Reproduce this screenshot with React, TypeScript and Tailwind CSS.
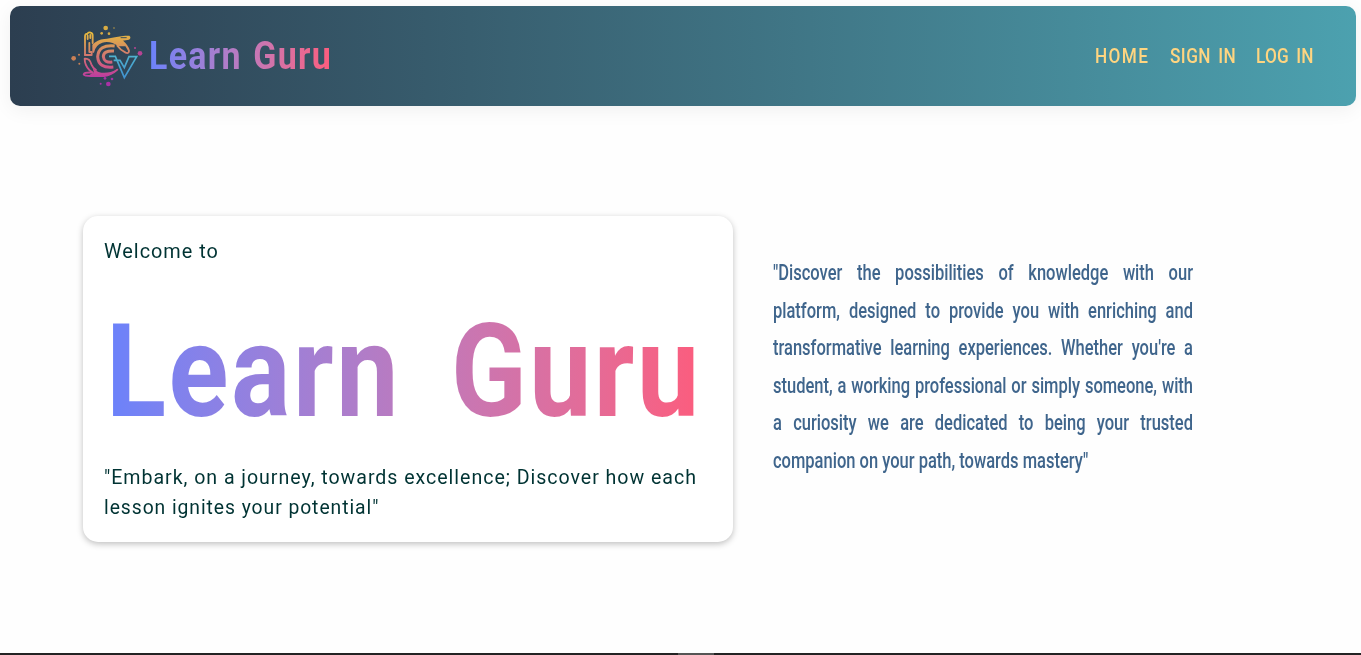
function Logo() {
  return (
    <svg viewBox="0 0 300 240" className="h-20 w-[100px] shrink-0" fill="none" aria-hidden="true">
      <defs>
        <linearGradient id="warm" gradientUnits="userSpaceOnUse" x1="0" y1="50" x2="0" y2="190">
          <stop offset="0" stopColor="#e8bd3c" />
          <stop offset="0.22" stopColor="#dca052" />
          <stop offset="0.45" stopColor="#d4806a" />
          <stop offset="0.75" stopColor="#cf5585" />
          <stop offset="1" stopColor="#b93aa4" />
        </linearGradient>
        <linearGradient id="cool" gradientUnits="userSpaceOnUse" x1="0" y1="120" x2="0" y2="195">
          <stop offset="0" stopColor="#4fb3cf" />
          <stop offset="1" stopColor="#3f8fd0" />
        </linearGradient>
      </defs>
      <g stroke="url(#warm)" strokeWidth="5.5" strokeLinecap="round" strokeLinejoin="round">
        <path d="M75 120V65Q75 55 82 57Q85 50 92 53Q98 54 98 62V84" />
        <path d="M75 120H95V111H88V84M83 62V72M91 60V69" />
        <path d="M186 78Q202 92 207 107Q207 117 197 113Q181 105 172 92" />
        <path d="M74 131Q74 150 88 165L98 173M74 131Q89 129 94 148Q98 158 108 165" />
        <path d="M98 173Q74 171 71 178Q73 183 94 183H132Q154 181 172 164" />
      </g>
      <g fill="url(#warm)">
        <path d="M97 89Q112 74 133 72C155 70 172 62 208 62Q215 68 207 74L188 77L198 94L176 94Q150 76 127 83Q106 90 102 113H97Z" />
        <path d="M98 158Q106 169 124 173Q148 176 172 162Q158 181 132 184H88Q88 176 102 174Z" />
      </g>
      <path d="M182 68H200" stroke="#3a4f5c" strokeWidth="3" />
      <g stroke="url(#warm)" strokeWidth="9">
        <path d="M164 93Q116 88 113 125Q115 161 160 156" />
        <path d="M162 108Q130 106 130 125Q132 144 157 141" />
      </g>
      <path d="M147 124H166L193 188L230 125H207L193 158L180 136H161" stroke="url(#cool)" strokeWidth="5" />
      <g fill="#d9ac43">
        <circle cx="137" cy="39" r="7" />
        <circle cx="125" cy="55" r="4" />
        <circle cx="147" cy="56" r="4" />
        <circle cx="162" cy="39" r="2" />
      </g>
      <g fill="#cb8055">
        <circle cx="41" cy="130" r="7" />
        <circle cx="57" cy="119" r="3" />
        <circle cx="58" cy="146" r="3" />
      </g>
      <g fill="#b64494">
        <circle cx="240" cy="115" r="7" />
        <circle cx="225" cy="99" r="3" />
      </g>
      <g fill="#a832a5">
        <circle cx="145" cy="207" r="7" />
        <circle cx="135" cy="190" r="4" />
        <circle cx="156" cy="192" r="4" />
        <circle cx="122" cy="206" r="3" />
      </g>
    </svg>
  );
}

const links = [
  { label: "HOME", box: "w-[54px] tracking-[1.6px]" },
  { label: "SIGN IN", box: "w-[65px] tracking-[0.5px] [word-spacing:3px]" },
  { label: "LOG IN", box: "w-[57px] tracking-[0.3px] [word-spacing:3px]" },
];

const lines = [
  '"Discover the possibilities of knowledge with our',
  "platform, designed to provide you with enriching and",
  "transformative learning experiences. Whether you're a",
  "student, a working professional or simply someone, with",
  "a curiosity we are dedicated to being your trusted",
];

export default function App() {
  return (
    <div className="flex h-[655px] w-full flex-col overflow-hidden bg-[#fefefe] font-['Roboto',sans-serif]">
      <header className="mt-1.5 mr-[5px] ml-2.5 flex h-[100px] shrink-0 items-start justify-between rounded-[10px] bg-linear-to-r from-[#2c3e50] to-[#4ca1af] shadow-[0_4px_20px_rgba(0,0,0,0.06)]">
        <div className="flex pt-[9px] pl-[50px]">
          <Logo />
          <div className="-ml-[11px] w-[240px] pt-[14px]">
            <h1 className="w-max origin-left scale-x-[0.87] bg-linear-to-r from-[#6a82fb] to-[#fc5c7d] bg-clip-text text-[39px] leading-[54px] font-bold tracking-[1.5px] text-transparent [word-spacing:2px]">
              Learn Guru
            </h1>
          </div>
        </div>
        <nav className="flex gap-[21px] pt-[38px] pr-[43px] text-[20px] leading-6 font-medium whitespace-nowrap text-[#ffd580]">
          {links.map((l) => (
            <a key={l.label} href="#" className={l.box}>
              <span className="inline-block origin-left scale-x-[0.86]">{l.label}</span>
            </a>
          ))}
        </nav>
      </header>

      <main className="flex flex-1 pt-[110px] pl-[83px]">
        <section className="h-[326px] w-[650px] shrink-0 rounded-[15px] bg-white px-[21px] pt-5 text-[20.5px] leading-[30px] text-[#033] shadow-[0_2px_6px_rgba(0,0,0,0.25)]">
          <p className="w-max origin-left scale-x-[0.97] tracking-[1px] whitespace-nowrap">Welcome to</p>
          <h2 className="mt-[31px] ml-0.5 h-[150px] w-max origin-left scale-x-[0.86] bg-linear-to-r from-[#6a82fb] to-[#fc5c7d] bg-clip-text text-[129px] leading-[150px] font-bold tracking-[3px] whitespace-nowrap text-transparent [word-spacing:23px]">
            Learn Guru
          </h2>
          <div className="mt-[15px] tracking-[1px] whitespace-nowrap">
            <p className="w-max origin-left scale-x-[0.956]">
              "Embark, on a journey, towards excellence; Discover how each
            </p>
            <p className="w-max origin-left scale-x-[0.942]">lesson ignites your potential"</p>
          </div>
        </section>
        <section className="ml-10 w-[420px] pt-[38px] text-[22px] leading-[37.5px] font-medium text-[#3f658c]">
          <div className="w-[560px] origin-left scale-x-[0.75] whitespace-nowrap">
            {lines.map((l) => (
              <p key={l} className="[text-align-last:justify]">{l}</p>
            ))}
            <p>companion on your path, towards mastery"</p>
          </div>
        </section>
      </main>

      <footer className="flex h-0.5 shrink-0 bg-[#232323] pl-[678px]">
        <div className="h-0.5 w-9 bg-[#555]" />
      </footer>
    </div>
  );
}
